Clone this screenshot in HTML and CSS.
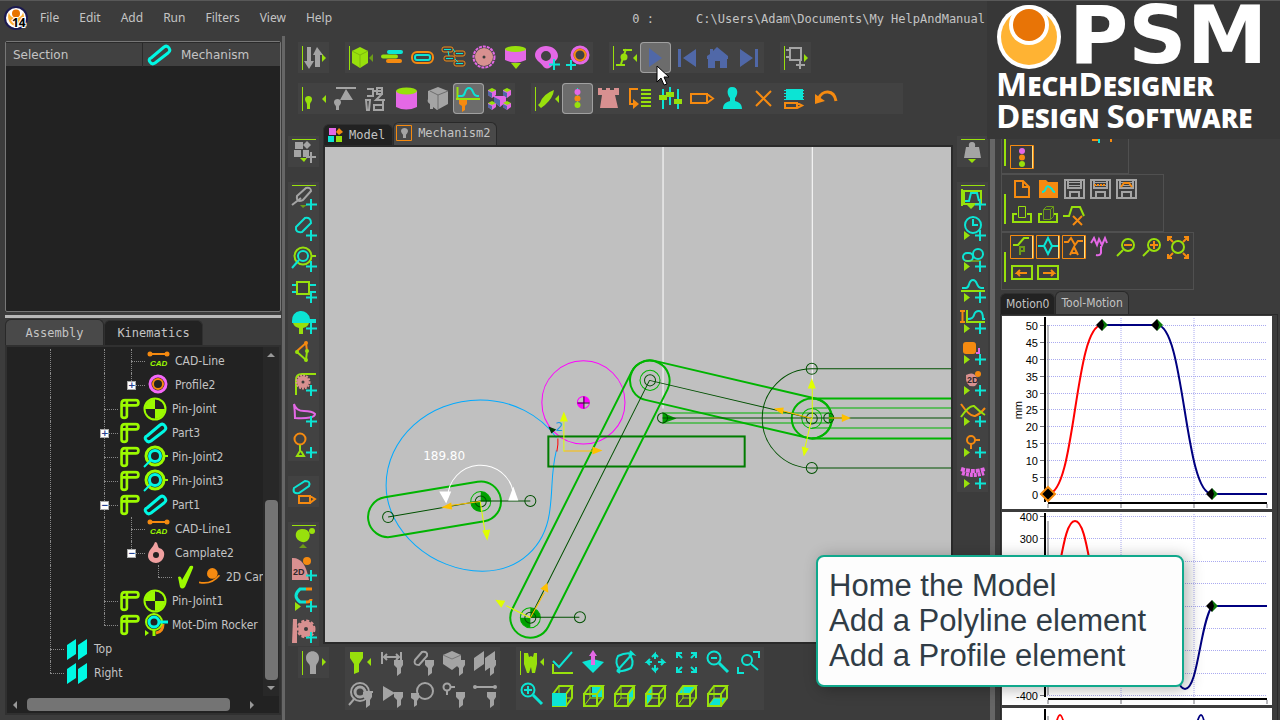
FILE: index.html
```html
<!DOCTYPE html>
<html lang="en">
<head>
<meta charset="utf-8">
<title>MechDesigner</title>
<link rel="stylesheet" href="styles.css">
</head>
<body>
<svg class="defs" aria-hidden="true">
  <symbol id="plus" viewBox="0 0 31 31"><path class="sc w2" d="M23 17v11M18 22.500h11"/></symbol>
  <symbol id="barl" viewBox="0 0 31 31"><path class="sg w1" d="M4.500 4v24"/></symbol>
  <symbol id="bart" viewBox="0 0 31 31"><path class="sg w1" d="M4 3.500h24"/></symbol>
  <symbol id="run" viewBox="0 0 31 31"><path class="fg" d="M7 18l6 4.500-6 4.500z"/></symbol>
  <symbol id="funnel" viewBox="0 0 31 31"><path class="fk" d="M18 13h9v5l-2 3v5l-4 3v-8l-3-3z"/></symbol>
  <symbol id="wire" viewBox="0 0 31 31"><path class="sg" d="M6 15h13v12H6zM6 15l6-8h13l-6 8M25 7v12l-6 8"/><path class="sg w1" d="M12 7v12h13M12 19l-6 8"/></symbol>
  <symbol id="floppy" viewBox="0 0 26 26"><path class="sk" d="M4 4h19v18H4zM7 4v8h13V4M9 22v-6h9v6"/><path class="sk w1" d="M8 6.500h11M8 9.500h11"/></symbol>
  <symbol id="lever" viewBox="0 0 27 24"><path class="st w3" d="M4 20V6q0-4 4-4h12q3 0 3 3t-3 3H4M10 3v17q0 2-3 2t-3-2"/></symbol>
  <symbol id="link" viewBox="0 0 27 24"><path class="stc w3" d="M5 15L18 4q3-2 5 1t-1 5L9 20q-3 2-5-1t1-4z"/></symbol>
  <symbol id="pin" viewBox="0 0 27 24"><circle class="st" cx="13" cy="12" r="10.500"/><path class="ft" d="M13 12V2a10 10 0 0 0-10 10zM13 12v10a10 10 0 0 0 10-10z"/></symbol>
  <symbol id="pinlink" viewBox="0 0 27 24"><circle class="st w3" cx="13" cy="11" r="9"/><circle class="stc w3" cx="13" cy="11" r="5.500"/><path class="stc" d="M9 15l-7 7"/><path class="st" d="M22 11h4"/></symbol>
  <symbol id="cadline" viewBox="0 0 27 24"><path class="so" d="M4 5h19"/><circle class="fo" cx="5" cy="5" r="2.500"/><circle class="fo" cx="22" cy="5" r="2.500"/><text class="cad" x="5" y="17">CAD</text></symbol>
  <symbol id="planes" viewBox="0 0 27 24"><path class="ftc" d="M3 8l9-6v15l-9 6zM14 8l9-6v15l-9 6z"/></symbol>
  <symbol id="node" viewBox="0 0 14 14"><path fill="#0a7a0a" d="M7 1l6 6-6 6z"/><path d="M7 1L1 7l6 6 2-6z"/></symbol>
</svg>

<div class="app">
  <header class="menubar">
    <svg class="appicon" viewBox="0 0 24 24"><circle cx="12" cy="12" r="11" fill="#fff" stroke="#1c1a50" stroke-width="2"/><path fill="#ffb030" d="M5 6c-3 8 2 14 7 14s10-6 7-14c-1 8-13 8-14 0z"/><circle cx="12" cy="7.500" r="4" fill="#e87400"/><text x="8" y="21">14</text></svg>
    <nav><button>File</button><button>Edit</button><button>Add</button><button>Run</button><button>Filters</button><button>View</button><button>Help</button></nav>
    <div class="status"><span>0 :</span><span>C:\Users\Adam\Documents\My HelpAndManual</span></div>
  </header>

  <main>
    <aside class="left">
      <section class="selection">
        <div class="head"><span>Selection</span><span><svg viewBox="0 0 27 24"><use href="#link"/></svg>Mechanism</span></div>
      </section>
      <div class="splitter"></div>
      <div class="tabs mono wide"><button class="tab on">Assembly</button><button class="tab">Kinematics</button></div>
      <section class="treebox">
        <ul class="tree">
          <li><i class="v"></i><i></i><i class="v"></i><i class="t"></i><svg class="n27" viewBox="0 0 27 24"><use href="#cadline"/></svg><span>CAD-Line</span></li>
          <li><i class="v"></i><i></i><i class="v"></i><i class="l"><button class="exp">+</button></i><svg class="n27" viewBox="0 0 27 24"><circle cx="13" cy="11" r="8" class="stp w3"/><circle cx="13" cy="11" r="5" class="so"/></svg><span>Profile2</span></li>
          <li><i class="v"></i><i></i><i class="t"></i><svg class="n24" viewBox="0 0 27 24"><use href="#lever"/></svg><svg class="n27" viewBox="0 0 27 24"><use href="#pin"/></svg><span>Pin-Joint</span></li>
          <li><i class="v"></i><i></i><i class="t"><button class="exp">+</button></i><svg class="n24" viewBox="0 0 27 24"><use href="#lever"/></svg><svg class="n27" viewBox="0 0 27 24"><use href="#link"/></svg><span>Part3</span></li>
          <li><i class="v"></i><i></i><i class="t"></i><svg class="n24" viewBox="0 0 27 24"><use href="#lever"/></svg><svg class="n27" viewBox="0 0 27 24"><use href="#pinlink"/></svg><span>Pin-Joint2</span></li>
          <li><i class="v"></i><i></i><i class="t"></i><svg class="n24" viewBox="0 0 27 24"><use href="#lever"/></svg><svg class="n27" viewBox="0 0 27 24"><use href="#pinlink"/></svg><span>Pin-Joint3</span></li>
          <li><i class="v"></i><i></i><i class="t"><button class="exp">−</button></i><svg class="n24" viewBox="0 0 27 24"><use href="#lever"/></svg><svg class="n27" viewBox="0 0 27 24"><use href="#link"/></svg><span>Part1</span></li>
          <li><i class="v"></i><i></i><i class="v"></i><i class="t"></i><svg class="n27" viewBox="0 0 27 24"><use href="#cadline"/></svg><span>CAD-Line1</span></li>
          <li><i class="v"></i><i></i><i class="v"></i><i class="l"><button class="exp">−</button></i><svg class="n27" viewBox="0 0 27 24"><path class="cam" fill-rule="evenodd" d="M10 1c3 0 2 3 4 6 4 1 6 4 5 8s-4 7-8 7-8-3-8-7c0-6 5-8 7-14zM11 11a3 3 0 1 0 0 6 3 3 0 0 0 0-6z"/></svg><span>Camplate2</span></li>
          <li><i class="v"></i><i></i><i class="v"></i><i></i><i class="l"></i><svg class="n27" viewBox="0 0 27 24"><path class="ft" d="M6 12q3-2 4 3L18 1q4-1 3 2L13 22q-3 3-5 0z"/></svg><svg class="n24" viewBox="0 0 27 24"><circle class="fo" cx="15" cy="8" r="6"/><path class="so" d="M0 18q14 3 23-8"/></svg><span>2D Cam</span></li>
          <li><i class="v"></i><i></i><i class="t"></i><svg class="n24" viewBox="0 0 27 24"><use href="#lever"/></svg><svg class="n27" viewBox="0 0 27 24"><use href="#pin"/></svg><span>Pin-Joint1</span></li>
          <li><i class="v"></i><i></i><i class="l"></i><svg class="n24" viewBox="0 0 27 24"><use href="#lever"/></svg><svg class="n27" viewBox="0 0 27 24"><path class="so w3" d="M21 11q0 8-7 9"/><circle class="st" cx="12" cy="9" r="8"/><circle class="stc w3" cx="12" cy="9" r="5"/><path class="stc w3" d="M17 9h9"/><path class="st w3" d="M12 17v6"/><path class="ft" d="M3 17l4 3-4 3z"/></svg><span>Mot-Dim Rocker</span></li>
          <li><i class="t"></i><svg class="n27" viewBox="0 0 27 24"><use href="#planes"/></svg><span>Top</span></li>
          <li><i class="l"></i><svg class="n27" viewBox="0 0 27 24"><use href="#planes"/></svg><span>Right</span></li>
        </ul>
        <div class="vbar"><b class="up"></b><div class="thumb"></div><b class="down"></b></div>
        <div class="hbar"><b class="prev"></b><div class="thumb"></div><b class="next"></b></div>
      </section>
    </aside>

    <div class="center">
      <div class="tools">
        <div class="group">
          <button class="tool"><svg viewBox="0 0 31 31"><use href="#barl"/><path class="fk" d="M9 5h4v14h3l-5 8-5-8h3zM17 25V13h-2l4-8 6 8h-3v12z"/><path class="fg" d="M24 12l4 4-4 4z"/></svg></button>
        </div>
        <div class="group">
          <button class="tool"><svg viewBox="0 0 31 31"><use href="#barl"/><path class="fg" d="M15 5l8 4v12l-8 5-8-5V9z"/><path stroke="#7cb80c" d="M7 9l8 4 8-4M15 13v13"/><path fill="#6c9c18" d="M28 12v8l-4-4z"/></svg></button>
          <button class="tool"><svg viewBox="0 0 31 31"><g stroke-linecap="round"><path class="sc w4" d="M13 10h12"/><path class="sg w4" d="M7 14.500h13"/><path class="so w4" d="M12 19h12"/></g></svg></button>
          <button class="tool"><svg viewBox="0 0 31 31"><rect class="so" x="5" y="10" width="21" height="11" rx="5"/><rect class="sc" x="8" y="13" width="15" height="5" rx="2"/></svg></button>
          <button class="tool"><svg viewBox="0 0 31 31"><g class="so w1"><rect x="4" y="5" width="11" height="5" rx="2"/><rect x="16" y="9" width="11" height="5" rx="2"/><rect x="6" y="14" width="11" height="5" rx="2"/><rect x="16" y="19" width="11" height="5" rx="2"/></g><path class="sc w1" d="M6 7.500h7M18 11.500h7M8 16.500h7M18 21.500h7M15 7l2 3M10 9l1 5M17 17l3 3"/></svg></button>
          <button class="tool"><svg viewBox="0 0 31 31"><circle cx="15" cy="15" r="10.500" class="sp" stroke-dasharray="3 1"/><circle class="fr" cx="15" cy="15" r="9"/><circle cx="15" cy="15" r="1.500" fill="#3c3c3c"/></svg></button>
          <button class="tool"><svg viewBox="0 0 31 31"><path class="fp" d="M5 7v11q10 5 21 0V7z"/><ellipse class="fg" cx="15.500" cy="7" rx="10.500" ry="3"/><path class="fg" d="M11 21h10l-5 6z"/></svg></button>
          <button class="tool"><svg viewBox="0 0 31 31"><path class="fp" fill-rule="evenodd" d="M15 4c6 0 12 4 12 10 0 4-4 5-5 8-2 5-8 6-10 2-3-4-8-6-8-11s5-9 11-9zM15 9a5 5 0 1 0 0 10 5 5 0 0 0 0-10z"/><use href="#plus"/></svg></button>
          <button class="tool"><svg viewBox="0 0 31 31"><circle cx="18" cy="13" r="8" class="sp w3"/><circle cx="18" cy="13" r="5.500" class="so"/><path class="sc" d="M9 18v10M4 23h10"/></svg></button>
        </div>
        <div class="group">
          <button class="tool"><svg viewBox="0 0 31 31"><use href="#barl"/><path class="sg" d="M7 23h9M12 22l5-15M14 8h9"/><circle class="fg" cx="15" cy="15" r="3.500"/><path class="fg" d="M28 12v8l-4-4z"/></svg></button>
          <button class="tool down"><svg viewBox="0 0 31 31"><path class="fb" d="M9 6l13 10L9 25z"/></svg></button>
          <button class="tool"><svg viewBox="0 0 31 31"><path class="fb" d="M7 7h3v18H7zM25 7v18L12 16z"/></svg></button>
          <button class="tool"><svg viewBox="0 0 31 31"><path class="fb" d="M15 5l11 9v3h-1v9h-7v-7h-5v7H6v-9H5v-3l3-2V7h3v2z"/></svg></button>
          <button class="tool"><svg viewBox="0 0 31 31"><path class="fb" d="M22 7h3v18h-3zM7 7v18l13-9z"/></svg></button>
        </div>
        <div class="group">
          <button class="tool"><svg viewBox="0 0 31 31"><use href="#barl"/><path class="sk" d="M10 6h11v12H10zM6 8h4M6 15h4M20 18v9M16 23h9"/><path class="fg" d="M24 12l4 4-4 4z"/></svg></button>
        </div>
      </div>
      <div class="tools">
        <div class="group">
          <button class="tool"><svg viewBox="0 0 31 31"><use href="#barl"/><path class="fg" d="M7 16c0-4 7-4 7 0 0 3-2 3-2 6v4H9v-4c0-3-2-3-2-6z"/><path class="fg" d="M28 12v8l-4-4z"/></svg></button>
          <button class="tool"><svg viewBox="0 0 31 31"><path class="sk" d="M7 5h20"/><path class="fk" d="M17 6l7 11H11zM5 19c0-4 7-4 7 0 0 3-2 3-2 5v3H7v-3c0-2-2-2-2-5z"/></svg></button>
          <button class="tool"><svg viewBox="0 0 31 31"><path class="sk" d="M7 6h6v7H7M13 8h9M17 5h5v6h-5zM22 11l-6 6h9M14 22h9v5h-9zM6 17h4l-1 10H7zM23 18v9"/></svg></button>
          <button class="tool"><svg viewBox="0 0 31 31"><path class="fp" d="M5 8v16q10 5 21 0V8z"/><ellipse class="fg" cx="15.500" cy="8" rx="10.500" ry="3.500"/></svg></button>
          <button class="tool"><svg viewBox="0 0 31 31"><path class="fk" d="M16 4l10 4v13l-11 6-4-3v2H8v-5c-2-1-3-3-2-5V8z"/><path stroke="#6e6e6e" d="M8 8l8 4 10-4M16 12v14"/></svg></button>
          <button class="tool down"><svg viewBox="0 0 31 31"><path class="sg" d="M4.500 4v12M3 16h24"/><path class="sc" d="M5 13h4c4 0 2-8 7-8s3 8 8 8h2"/><path class="fo" d="M6 17h8v4l-2 2v4l-3 2v-6l-3-2z"/></svg></button>
          <button class="tool"><svg viewBox="0 0 31 31"><path class="fp" d="M4 7h8v5l-4 3-4-3zM19 7h8v5l-4 3-4-3zM10 13h12v6l-6 5-6-5zM4 20h8v4l-4 3-4-3zM19 20h8v4l-4 3-4-3z"/><path class="fg" d="M4 7l4-2 4 2-4 2zM19 7l4-2 4 2-4 2zM4 20l4-2 4 2-4 2zM19 20l4-2 4 2-4 2z"/><path class="fb" d="M4 8l4 2v5l-4-3zM19 8l4 2v5l-4-3zM10 14l6 3v7l-6-5zM4 21l4 2v4l-4-3zM19 21l4 2v4l-4-3z"/></svg></button>
        </div>
        <div class="group pad">
          <button class="tool"><svg viewBox="0 0 31 31"><use href="#barl"/><path class="fg" d="M9 20Q12 11 23 7q-1 8-9 15l-4 3-3-3z"/><path class="fg" d="M28 12v8l-4-4z"/></svg></button>
          <button class="tool down"><svg viewBox="0 0 31 31"><path class="sc w1" d="M15.500 5v20"/><circle class="fp" cx="15.500" cy="9" r="3"/><circle class="fo" cx="15.500" cy="15.500" r="3"/><circle class="fg" cx="15.500" cy="22" r="3"/></svg></button>
          <button class="tool"><svg viewBox="0 0 31 31"><path class="fr" d="M5 5h4v2h4V5h4v2h4V5h5v7h-4l3 13H7l2-13H5z"/></svg></button>
          <button class="tool"><svg viewBox="0 0 31 31"><path class="so" d="M14 6H6v15h6"/><path class="fo" d="M9 16l6 5-6 5z"/><path class="sg" d="M17 7h10M17 11h10M17 15h10M17 19h10M17 23h10"/></svg></button>
          <button class="tool"><svg viewBox="0 0 31 31"><path class="sc" d="M8 6v20M15 4v18M23 6v20"/><path class="fg" d="M4 12h8v5H4zM11 9h8v5h-8zM19 16h8v5h-8z"/></svg></button>
          <button class="tool"><svg viewBox="0 0 31 31"><path class="so" d="M5 11h16v9H5zM21 11l6 4.500-6 4.500"/></svg></button>
          <button class="tool"><svg viewBox="0 0 31 31"><path class="fc" d="M15 4c7 0 6 8 3 11v3c4 1 7 3 7 8H6c0-5 3-7 7-8v-3c-3-3-4-11 2-11z"/></svg></button>
          <button class="tool"><svg viewBox="0 0 31 31"><path class="so" d="M8 8l15 15M23 8L8 23"/></svg></button>
          <button class="tool"><svg viewBox="0 0 31 31"><path class="fc" d="M7 6h17v11H7z"/><path class="sc w1" d="M5 7.500h20M5 10.500h20M5 13.500h20M5 16.500h20"/><path class="so" d="M6 20h12v5H6zM18 20l5 2.500-5 2.500"/></svg></button>
          <button class="tool"><svg viewBox="0 0 31 31"><path class="so w3" d="M9 15c3-8 15-9 17 3"/><path class="fo" d="M5 11v10l10-3z"/></svg></button>
        </div>
      </div>

      <div class="work">
        <div class="vtools">
          <div class="group"><button class="tool"><svg viewBox="0 0 31 31"><use href="#bart"/><path class="fk" d="M7 6h8v7H7zM19 5l4 4-4 4-4-4zM6 14h7v7H6zM15 14h6v7h-6z"/><path class="sk" d="M23 16v11M18 21h10"/><path class="fg" d="M12 22h7l-3 4z"/></svg></button></div>
          <div class="group">
            <button class="tool"><svg viewBox="0 0 31 31"><use href="#bart"/><path class="sk" d="M9 14l9-8q5-1 5 3l-8 9q-7 3-6-4zM4 23l9-7"/><path fill="#6c9c18" d="M12 23h7l-4 3z"/><use href="#plus"/></svg></button>
            <button class="tool"><svg viewBox="0 0 31 31"><path class="sc" d="M8 14l9-9q6-1 6 5l-9 9q-7 1-6-5z"/><use href="#plus"/></svg></button>
            <button class="tool"><svg viewBox="0 0 31 31"><circle class="sg" cx="15" cy="12" r="8.500"/><circle class="sc" cx="15" cy="12" r="5"/><path class="sc" d="M11 16l-7 8"/><path class="sg" d="M23 12h5"/><use href="#plus"/></svg></button>
            <button class="tool"><svg viewBox="0 0 31 31"><path class="sc" d="M4 10h24M4 17h24"/><rect class="sg" x="9" y="7" width="12" height="12" style="fill:#3c3c3c"/><use href="#plus"/></svg></button>
            <button class="tool"><svg viewBox="0 0 31 31"><path class="fc" d="M4 15a9 9 0 0 1 18-2h6v4H4z"/><path class="fg" d="M5 17h16q-1 4-6 5v6h-4v-6q-5-1-6-5z"/><use href="#plus"/></svg></button>
            <button class="tool"><svg viewBox="0 0 31 31"><path class="sg" d="M9 15l9 8 1-9"/><path class="so" d="M9 14l9-8 1 8"/><circle class="fg" cx="9" cy="15" r="2"/><circle class="fg" cx="18" cy="23" r="2"/><circle class="fg" cx="19" cy="14" r="2"/><circle class="fo" cx="18" cy="6" r="2"/></svg></button>
            <button class="tool"><svg viewBox="0 0 31 31"><path class="sg" d="M8 27V12q0-6 6-6h14"/><circle cx="15" cy="14" r="6" class="fr"/><circle cx="15" cy="14" r="6.500" stroke="#dc9090" stroke-width="2" stroke-dasharray="2 1"/><circle cx="15" cy="14" r="1.500" fill="#3c3c3c"/><use href="#plus"/></svg></button>
            <button class="tool"><svg viewBox="0 0 31 31"><path class="sp" d="M6 5q2 7 10 7t11 3q0 5-20 4 0-7-1-14z"/><use href="#plus"/></svg></button>
            <button class="tool"><svg viewBox="0 0 31 31"><circle class="so" cx="12" cy="9" r="5.500"/><path class="sg" d="M12 15v6l-3 5h7l-3-5"/><use href="#plus"/></svg></button>
          </div>
          <div class="group"><button class="tool"><svg viewBox="0 0 31 31"><path class="sc" d="M6 12l11-7q6 0 4 5L11 17q-7 1-5-5z"/><path class="so" d="M11 20h11v7H11zM22 20l5 3-5 4"/></svg></button></div>
          <div class="group">
            <button class="tool"><svg viewBox="0 0 31 31"><use href="#bart"/><path class="fg" d="M14 7c9 0 9 8 6 11-3 4-10 2-12-3-1-4 1-8 6-8z"/><circle class="fg" cx="24" cy="9" r="3"/><path fill="#6c9c18" d="M15 22l4 4h-8z"/></svg></button>
            <button class="tool"><svg viewBox="0 0 31 31"><path class="fr" d="M4 5q13-1 17 22H4z"/><circle class="fo" cx="19" cy="8" r="4"/><text class="two" x="5" y="22">2D</text><use href="#plus"/></svg></button>
            <button class="tool"><svg viewBox="0 0 31 31"><path class="sc w3" d="M18 5h-6q-8 7 0 13h6"/><path class="so w3" d="M18 5h6M18 18q5 0 5-3"/><use href="#run"/><use href="#plus"/></svg></button>
            <button class="tool"><svg viewBox="0 0 31 31"><path class="fr" d="M5 4h4v24H4z"/><circle class="fr" cx="18" cy="14" r="8"/><circle cx="18" cy="14" r="8.500" stroke="#dc9090" stroke-width="2" stroke-dasharray="3 2"/><circle cx="18" cy="14" r="2" fill="#3c3c3c"/><use href="#plus"/></svg></button>
          </div>
        </div>

        <div class="stage">
          <div class="tabs mono">
            <button class="tab"><svg viewBox="0 0 16 16"><path class="fp" d="M2 1h7v7H2z"/><path class="fo" d="M12 1l4 4-4 3-3-3z"/><path class="fc" d="M1 9h6v6H1z"/><path class="fg" d="M9 9h6v6H9z"/></svg>Model</button>
            <button class="tab on"><svg viewBox="0 0 16 16"><path class="so w1" d="M.5.5h15v15H.5z"/><path class="fk" d="M5 6c0-4 7-4 7 0 0 2-2 3-2 4v3H7v-3c0-1-2-2-2-4z"/></svg>Mechanism2</button>
          </div>
          <div class="frame">
            <svg class="model" viewBox="325 147 625 497" preserveAspectRatio="xMinYMin slice">
              <path stroke="#fff" d="M662.500 147v261M811.500 147v238"/>
              <path stroke="#00aaff" d="M556 437C540 415 512 399.500 480 399.500C428 399.500 386 438 386 485C386 530 432 570.500 482 570.500C520 570.500 544 545 549 513C553 487 550 475 556 450"/>
              <path stroke="#f00" d="M557.500 438v6l-1 7"/>
              <circle cx="583" cy="402" r="41.500" stroke="#ff00ff"/>
              <circle cx="583" cy="402" r="6" stroke="#ff00ff"/><path fill="#ff00ff" d="M583 402v-6a6 6 0 0 1 6 6zM583 402v6a6 6 0 0 1-6-6z"/><path stroke="#300030" d="M577 402.500h12M583.500 396v12"/>
              <rect class="w2" x="548" y="436" width="196" height="30" stroke="#007c00"/>
              <g stroke="#00b400" class="w2">
                <rect x="-20" y="-20" width="134" height="40" rx="20" transform="translate(388 516.500) rotate(-9.500)"/>
                <rect x="-20" y="-20" width="305" height="40" rx="20" transform="translate(530 617) rotate(-63.300)"/>
                <rect x="-20" y="-20" width="206" height="40" rx="20" transform="translate(649.500 380) rotate(13.200)"/>
                <circle cx="811" cy="418" r="20"/><path d="M811 398h139M811 438h139"/>
              </g>
              <g stroke="#00b400"><path d="M811 407.500h139M811 427.500h139M662 412.500h166M662 422.500h166"/><circle cx="811" cy="418" r="10"/><circle cx="649.500" cy="380" r="10"/><circle cx="530" cy="617" r="10"/><circle cx="480.500" cy="501" r="10"/></g>
              <path fill="#00a000" d="M480.500 501v-10a10 10 0 0 1 10 10zM480.500 501v10a10 10 0 0 1-10-10zM530 617v-10a10 10 0 0 1 10 10zM530 617v10a10 10 0 0 1-10-10zM662 412l14 6-14 5zM828 412l4 5-4 6z"/>
              <g stroke="#005000">
                <path d="M811 368.500h139M811 467.500h139M811 368.500a49 49 0 0 0 0 99M662 417.500h288M388 516.500l92-16h50M649 380l-119 236.500h49M649 380l162 38"/>
                <circle cx="811" cy="368.500" r="5.500"/><circle cx="811" cy="467.500" r="5.500"/><circle cx="811" cy="418" r="5.500"/><circle cx="828" cy="417.500" r="5"/><circle cx="662" cy="417.500" r="5"/><circle cx="388" cy="516.500" r="5.500"/><circle cx="480.500" cy="501" r="5.500"/><circle cx="530" cy="500.500" r="5.500"/><circle cx="649.500" cy="380" r="5.500"/><circle cx="530" cy="617" r="5.500"/><circle cx="579.500" cy="616.500" r="5.500"/>
              </g>
              <path fill="#003c00" d="M548 426l8 3-5 4z"/>
              <path stroke="#ffc000" d="M480 501l-30 4M530 617l14-25M563.500 450.500h30M811 418l-34-9M828 417.500h14"/>
              <path fill="#ffc000" d="M441 507l10-5 1 7zM547 582l1 10-8-4zM602 450l-10-4v8zM773 408l10-1-1 7zM850 417.500l-9-4v8z"/>
              <path stroke="#e0ff00" d="M480 501l5 32M530 617l-24-12M563.500 451v-30M811.500 418v-32M811 418l-7 30"/>
              <path fill="#e0ff00" d="M487 540l-5-10 8-1zM495 599l10 1-4 7zM563.500 411l-4 10h8zM811 378l-4 10h8zM803 456l-2-10 7 2z"/>
              <path stroke="#fff" d="M447.500 497A33 33 0 0 1 513 492"/><path fill="#fff" d="M439 491h12l-5 12zM513 486l5 14h-10z"/>
              <text x="423" y="460" fill="#fff" class="dim">189.80</text><text x="555" y="431" fill="#1a9ae0" class="dim">2</text>
            </svg>
          </div>
        </div>

        <div class="vtools">
          <div class="group"><button class="tool"><svg viewBox="0 0 31 31"><use href="#bart"/><path class="fk" d="M12 11q-1-5 3-5t3 5h4l2 11H7l2-11z"/><path class="fg" d="M11 23h8l-4 4z"/></svg></button></div>
          <div class="group">
            <button class="tool"><svg viewBox="0 0 31 31"><use href="#bart"/><path class="sg" d="M7 9h17v13H7zM5 7v17"/><path class="sc" d="M8 19h4l2-8h6l2 8"/><path class="fg" d="M10 23h8l-4 4z"/><use href="#plus"/></svg></button>
            <button class="tool"><svg viewBox="0 0 31 31"><circle class="sc" cx="16" cy="12" r="8"/><path class="sc" d="M16 6v6h5"/><use href="#run"/><use href="#plus"/></svg></button>
            <button class="tool"><svg viewBox="0 0 31 31"><rect class="sc" x="6" y="9" width="10" height="8" rx="4"/><circle class="sc" cx="21" cy="10" r="5"/><path class="sg w1" d="M8 17h16"/><use href="#run"/><use href="#plus"/></svg></button>
            <button class="tool"><svg viewBox="0 0 31 31"><path class="sc" d="M5 13h4c4 0 2-8 7-8s3 8 8 8h3"/><path class="sg" d="M4 16h24"/><use href="#run"/><use href="#plus"/></svg></button>
            <button class="tool"><svg viewBox="0 0 31 31"><path class="so" d="M3 5h5M3 16h5M5.500 5v11"/><path class="sg" d="M10 4v12h18"/><path class="sc" d="M11 13q5 0 6-4t5-4 4 8h2"/><use href="#run"/><use href="#plus"/></svg></button>
            <button class="tool"><svg viewBox="0 0 31 31"><rect class="fo" x="6" y="5" width="13" height="12" rx="3"/><path class="sp" d="M22 11v5h-3"/><use href="#run"/><use href="#plus"/></svg></button>
            <button class="tool"><svg viewBox="0 0 31 31"><path class="fr" d="M9 7q7-4 11 2 3 4-2 9-10 2-9-11z"/><circle class="fo" cx="21" cy="6" r="3"/><text class="two" x="10" y="15">2D</text><use href="#run"/><use href="#plus"/></svg></button>
            <button class="tool"><svg viewBox="0 0 31 31"><path class="so" d="M4 5q9 13 14 12 5-2 10-8"/><path class="sg" d="M4 18q8-12 13-11 6 6 11 9"/><use href="#run"/><use href="#plus"/></svg></button>
            <button class="tool"><svg viewBox="0 0 31 31"><circle class="so" cx="14" cy="10" r="4"/><path class="so" d="M18 10h5M14 14v5"/><use href="#run"/><use href="#plus"/></svg></button>
            <button class="tool"><svg viewBox="0 0 31 31"><path class="sp w4" stroke-dasharray="4 1" d="M4 8q12 4 24 0"/><path class="sp w4" stroke-dasharray="3 1" d="M5 12q11 4 22 0"/><use href="#run"/><use href="#plus"/></svg></button>
          </div>
        </div>
      </div>

      <div class="tools bottom">
        <div class="group"><button class="tool"><svg viewBox="0 0 31 31"><use href="#barl"/><path class="fk" d="M8 11c0-9 13-9 13 0 0 5-3 5-3 9v7h-6v-7c0-4-4-4-4-9z"/><path class="fg" d="M24 11l4 4-4 4z"/></svg></button></div>
        <div class="group c5">
          <button class="tool"><svg viewBox="0 0 31 31"><path class="fg" d="M5 5h13v6l-4 6v8l-5 2V17l-4-6z"/><path class="fg" d="M26 11v8l-4-4z"/></svg></button>
          <button class="tool"><svg viewBox="0 0 31 31"><path class="sk" d="M6 5v12M25 5v12M8 10h15M11 7l-3 3 3 3M20 7l3 3-3 3"/><use href="#funnel"/></svg></button>
          <button class="tool"><svg viewBox="0 0 31 31"><path class="sk" d="M8 13l7-8q6-1 5 4l-8 9q-6 0-4-5z"/><use href="#funnel"/></svg></button>
          <button class="tool"><svg viewBox="0 0 31 31"><path class="fk" d="M14 4l9 4v8l-9 7-9-6V8z"/><path stroke="#777" d="M5 8l9 4 9-4"/><use href="#funnel"/></svg></button>
          <button class="tool"><svg viewBox="0 0 31 31"><path class="fk" d="M5 11l10-7v13L5 24zM16 11l10-7v13l-10 7z"/><use href="#funnel"/></svg></button>
          <button class="tool"><svg viewBox="0 0 31 31"><circle class="sk" cx="15" cy="13" r="9"/><circle class="sk w3" cx="15" cy="13" r="5"/><path class="sk" d="M10 19l-6 7M20 13h8"/><use href="#funnel"/></svg></button>
          <button class="tool"><svg viewBox="0 0 31 31"><path class="fk" d="M7 7l12 7-12 8z"/><use href="#funnel"/></svg></button>
          <button class="tool"><svg viewBox="0 0 31 31"><circle class="sk" cx="18" cy="12" r="8"/><path class="fk" d="M4 14h8v5l-2 3v4l-3 2v-7l-3-2z"/></svg></button>
          <button class="tool"><svg viewBox="0 0 31 31"><circle class="sk" cx="9" cy="8" r="3.500"/><path class="sk" d="M13 8h4M9 12v4"/><use href="#funnel"/></svg></button>
          <button class="tool"><svg viewBox="0 0 31 31"><path class="sk" d="M5 8h21"/><circle class="fk" cx="6" cy="8" r="2"/><circle class="fk" cx="26" cy="8" r="2"/><use href="#funnel"/></svg></button>
        </div>
        <div class="group c8">
          <button class="tool"><svg viewBox="0 0 31 31"><use href="#barl"/><path class="fg" d="M8 6h4l1 4 2-1 2 1 1-4h3v11l-2 9h-3l-1-6-2 6h-2L8 17z"/><path class="fg" d="M28 11v8l-4-4z"/></svg></button>
          <button class="tool"><svg viewBox="0 0 31 31"><path class="sc" d="M6 14l6 6L25 5"/><path class="sg" d="M6 17v9h20"/></svg></button>
          <button class="tool"><svg viewBox="0 0 31 31"><path class="fc" d="M15 12l11 3-11 11-11-11z"/><path class="fp" d="M13 18V9h-2l4-6 4 6h-2v9z"/></svg></button>
          <button class="tool"><svg viewBox="0 0 31 31"><path class="sc" d="M11 23q-6-7-2-14 8-4 15-2l-3-3M20 7q6 7 2 14-8 4-14 3l3 2M8 24L24 6"/></svg></button>
          <button class="tool"><svg viewBox="0 0 31 31"><path class="sc" d="M15 12V7l-3 3M15 7l3 3M15 18v6l-3-3M15 24l3-3M12 15H7l3-3M7 15l3 3M18 15h6l-3-3M24 15l-3 3"/></svg></button>
          <button class="tool"><svg viewBox="0 0 31 31"><path class="sc" d="M6 11V6h5M6 6l5 5M25 11V6h-5M25 6l-5 5M6 20v5h5M6 25l5-5M25 20v5h-5M25 25l-5-5"/></svg></button>
          <button class="tool"><svg viewBox="0 0 31 31"><circle class="sc" cx="12" cy="11" r="6.500"/><path class="sc" d="M9 11h6"/><path class="sc w3" d="M17 16l9 9"/></svg></button>
          <button class="tool"><svg viewBox="0 0 31 31"><circle class="sc" cx="14" cy="13" r="5"/><path class="sc" d="M18 17l7 6M20 5h6v6M5 20v6h6"/></svg></button>
          <button class="tool"><svg viewBox="0 0 31 31"><circle class="sc" cx="12" cy="11" r="6.500"/><path class="sc" d="M8 11h8M12 7v8"/><path class="sc w3" d="M17 16l9 9"/></svg></button>
          <button class="tool"><svg viewBox="0 0 31 31"><use href="#wire"/><path class="fc" d="M5 14h14v13H5z"/></svg></button>
          <button class="tool"><svg viewBox="0 0 31 31"><path class="fc" d="M14 8h11v10H14z"/><use href="#wire"/></svg></button>
          <button class="tool"><svg viewBox="0 0 31 31"><path class="fc" d="M19 15l6-8v12l-6 8z"/><use href="#wire"/></svg></button>
          <button class="tool"><svg viewBox="0 0 31 31"><path class="fc" d="M6 15l6-8v12l-6 8z"/><use href="#wire"/></svg></button>
          <button class="tool"><svg viewBox="0 0 31 31"><path class="fc" d="M6 15l6-8h13l-6 8z"/><use href="#wire"/></svg></button>
          <button class="tool"><svg viewBox="0 0 31 31"><path class="fc" d="M6 27l6-8h13l-6 8z"/><use href="#wire"/></svg></button>
        </div>
      </div>
    </div>

    <aside class="right">
      <div class="box b4">
        <button class="mini"></button><button class="mini"></button><button class="mini"></button><button class="mini"><svg viewBox="0 0 26 26"><path class="so" d="M5 22h7M24 20v4"/><path class="sc" d="M12 20v5"/></svg></button>
        <button class="mini"><svg viewBox="0 0 26 26"><path class="so w1" d="M1.500 1.500h23v23h-23z"/><path stroke="#ffe080" d="M23.500 2v22"/><circle class="fp" cx="13" cy="7" r="3"/><circle class="fo" cx="13" cy="13.500" r="3"/><circle class="fg" cx="13" cy="20" r="3"/></svg></button>
      </div>
      <div class="box b5">
        <button class="mini"><svg viewBox="0 0 26 26"><path class="so" d="M6 5h8l6 6v10H6zM14 5v6h6"/></svg></button>
        <button class="mini"><svg viewBox="0 0 26 26"><path class="fo" d="M4 4h7l2 2h10v16H4z"/><path class="sc" d="M7 16q3 0 4-4t6 1q1 3 3 3"/></svg></button>
        <button class="mini"><svg viewBox="0 0 26 26"><use href="#floppy"/></svg></button>
        <button class="mini"><svg viewBox="0 0 26 26"><use href="#floppy"/><path class="so" d="M7 9h12" stroke-dasharray="2 1"/></svg></button>
        <button class="mini"><svg viewBox="0 0 26 26"><use href="#floppy"/><path class="so" d="M8 11l3-4h5l3 4"/></svg></button>
        <button class="mini"><svg viewBox="0 0 26 26"><path class="sg" d="M8 12H4v8h18v-8h-4"/><path class="sg w1" d="M9.500 4.500h7v11h-7z"/></svg></button>
        <button class="mini"><svg viewBox="0 0 26 26"><path class="sg" d="M7 12H4v8h18v-8h-3"/><path stroke="#6c9c18" d="M8.500 7.500h7v10h-7zM8.500 7.500l3-3h7v10l-3 3M15.500 7.500l3-3"/></svg></button>
        <button class="mini"><svg viewBox="0 0 26 26"><path class="sg" d="M2 14h6l3-9h8l4 9"/><path class="so" d="M12 14l9 9M21 14l-9 9"/></svg></button>
      </div>
      <div class="box b7">
        <button class="mini"><svg viewBox="0 0 26 26"><path class="so w1" d="M1.500 1.500h23v23h-23z"/><path stroke="#ffe080" d="M23.500 2v22"/><path class="sg" d="M4 11h5l6-7h5"/><path stroke="#6c9c18" stroke-width="2" d="M11 21v-8h4v4h-4"/></svg></button>
        <button class="mini"><svg viewBox="0 0 26 26"><path class="so w1" d="M1.500 1.500h23v23h-23z"/><path stroke="#ffe080" d="M23.500 2v22"/><path class="sc" d="M3 12h6l4-8 4 8h6M9 12l4 8 4-8"/></svg></button>
        <button class="mini"><svg viewBox="0 0 26 26"><path class="so w1" d="M1.500 1.500h23v23h-23z"/><path stroke="#ffe080" d="M23.500 2v22"/><path class="so" d="M3 8h4l3-4 4 7 3-4h5M9 21l4-8 4 8M11 19h5"/></svg></button>
        <button class="mini"><svg viewBox="0 0 26 26"><path class="sp" d="M4 9l3-5 3 7 2-6 3 6 3-7 2 5M14 12v7q-1 3-5 2"/></svg></button>
        <button class="mini"><svg viewBox="0 0 26 26"><circle class="sg" cx="15" cy="11" r="6"/><path class="so" d="M11 11h8"/><path class="sg" d="M10 16l-6 6"/></svg></button>
        <button class="mini"><svg viewBox="0 0 26 26"><circle class="sg" cx="15" cy="11" r="6"/><path class="so" d="M11 11h8M15 7v8"/><path class="sg" d="M10 16l-6 6"/></svg></button>
        <button class="mini"><svg viewBox="0 0 26 26"><circle class="sg" cx="13" cy="13" r="6"/><path class="so" d="M3 7V3h4M3 3l5 5M23 7V3h-4M23 3l-5 5M3 20v4h4M3 24l5-5M23 20v4h-4M23 24l-5-5"/></svg></button>
        <button class="mini"><svg viewBox="0 0 26 26"><path class="sg" d="M3 6h20v13H3z"/><path class="so" d="M18 13H8l3-3M8 13l3 3"/></svg></button>
        <button class="mini"><svg viewBox="0 0 26 26"><path class="sg" d="M3 6h20v13H3z"/><path class="so" d="M8 13h11l-3-3M19 13l-3 3"/></svg></button>
      </div>
      <div class="tabs sans"><button class="tab">Motion0</button><button class="tab on">Tool-Motion</button></div>
      <div class="charts">
        <svg class="chart" viewBox="1002 318 270 193">
          <path class="grid" d="M1045 327.500h222M1045 344.500h222M1045 361.500h222M1045 378.500h222M1045 395.500h222M1045 411.500h222M1045 428.500h222M1045 445.500h222M1045 462.500h222M1045 479.500h222M1045 496.500h222M1121 320v184M1194 320v184"/>
          <path class="tick" d="M1040 327.500h5M1040 344.500h5M1040 361.500h5M1040 378.500h5M1040 395.500h5M1040 411.500h5M1040 428.500h5M1040 445.500h5M1040 462.500h5M1040 479.500h5M1040 496.500h5M1048 506v4M1121 506v4M1194 506v4M1267 506v4M1048 327v169"/>
          <path class="axis" d="M1045 319v185M1048 505h219"/>
          <g class="lab"><text x="1038" y="332">50</text><text x="1038" y="349">45</text><text x="1038" y="366">40</text><text x="1038" y="383">35</text><text x="1038" y="400">30</text><text x="1038" y="416">25</text><text x="1038" y="433">20</text><text x="1038" y="450">15</text><text x="1038" y="467">10</text><text x="1038" y="484">5</text><text x="1038" y="501">0</text><text transform="translate(1022 403) rotate(-90)">mm</text></g>
          <path class="red" d="M1048 496C1076 496 1074 327 1102 327"/><path class="navy" d="M1102 327h55C1185 327 1184 496 1212 496h55"/>
          <path d="M1048 489l7 7-7 7-7-7z" fill="#000" stroke="#f78a0a" stroke-width="2"/>
          <use href="#node" x="1095" y="320" width="14" height="14"/><use href="#node" x="1150" y="320" width="14" height="14"/><use href="#node" x="1205" y="489" width="14" height="14"/>
        </svg>
        <svg class="chart" viewBox="1002 514 270 193">
          <path class="grid" d="M1045 518.500h222M1045 540.500h222M1045 563.500h222M1045 585.500h222M1045 608.500h222M1045 630.500h222M1045 652.500h222M1045 675.500h222M1045 697.500h222M1121 516v184M1194 516v184"/>
          <path class="tick" d="M1040 518.500h5M1040 540.500h5M1040 697.500h5M1048 702v4M1121 702v4M1194 702v4M1267 702v4M1048 523v174"/>
          <path class="axis" d="M1045 515v184M1048 701h219"/>
          <g class="lab"><text x="1038" y="523">400</text><text x="1038" y="545">300</text><text x="1038" y="702">-400</text></g>
          <path class="red" d="M1048 608C1060 590 1062 523 1075 523S1090 590 1102 608"/><path class="navy" d="M1157 608C1170 626 1172 691 1185 691S1200 626 1212 608h55"/>
          <use href="#node" x="1205" y="601" width="14" height="14"/>
        </svg>
        <svg class="chart" viewBox="1002 710 270 193">
          <path class="axis" d="M1045 711v184"/><path class="tick" d="M1048 718v170"/><path class="red" d="M1048 800C1053 740 1056 717 1060 717S1067 740 1075 800"/><path class="navy" d="M1185 800C1193 740 1197 717 1201 717S1207 740 1212 800"/>
        </svg>
      </div>
    </aside>
  </main>

  <div class="brand">
    <div class="brandtop"><svg viewBox="0 0 66 66"><circle cx="33" cy="33" r="32" fill="#fff"/><circle cx="33" cy="33" r="28" fill="#ffb333"/><circle cx="33" cy="21" r="20" fill="#fff"/><circle cx="33" cy="21" r="16" fill="#e87406"/></svg><strong>PSM</strong></div>
    <p><b>M</b>ech<b>D</b>esigner</p><p><b>D</b>esign <b>S</b>oftware</p>
  </div>
  <div class="callout"><p>Home the Model</p><p>Add a Polyline element</p><p>Add a Profile element</p></div>
  <svg class="cursor" viewBox="0 0 14 22"><path fill="#fff" stroke="#000" d="M1 1v16l4-4 3 7 3-1-3-7h5z"/></svg>
</div>
</body>
</html>
```
FILE: styles.css
```css
* { box-sizing: border-box; }
body { margin: 0; background: #3c3c3c; color: #c4c4c4; font: 12px/16px "Noto Sans", "Open Sans", sans-serif; }
button { font: inherit; color: inherit; background: none; border: 0; padding: 0; }
p { margin: 0; }
svg { display: block; fill: none; }
.defs { position: absolute; width: 0; height: 0; }

.sg, .sc, .so, .sp, .sk, .st, .stc, .stp { stroke-width: 2; }
.sg { stroke: #98e00c; } .fg { fill: #98e00c; }
.sc { stroke: #0ce4d4; } .fc { fill: #0ce4d4; }
.so { stroke: #f58a10; } .fo { fill: #f58a10; }
.sp { stroke: #e468e6; } .fp { fill: #e468e6; }
.sk { stroke: #a4a4a4; } .fk { fill: #a4a4a4; }
.fb { fill: #5068a8; } .fr { fill: #d89090; }
.st { stroke: #9cfa00; } .ft { fill: #9cfa00; }
.stc { stroke: #00f8e4; } .ftc { fill: #00f8e4; }
.stp { stroke: #f468f8; } .cam { fill: #f0a0a0; }
.w1 { stroke-width: 1; } .w2 { stroke-width: 2; } .w3 { stroke-width: 3; } .w4 { stroke-width: 4; }
.cad { font: italic bold 8px "Liberation Sans", sans-serif; fill: #9cfa00; }
.two { font: bold 9px "Liberation Sans", sans-serif; fill: #30282c; }

.app { position: relative; display: flex; flex-direction: column; height: 100vh; min-height: 720px; overflow: hidden; border-top: 1px solid #585858; }
.menubar { display: flex; align-items: center; flex: none; height: 35px; padding-bottom: 2px; padding-left: 4px; padding-right: 295px; }
.appicon { width: 24px; height: 24px; overflow: visible; }
.appicon text { font: bold 12px "Noto Sans", sans-serif; fill: #000; stroke: #fff; stroke-width: 2; paint-order: stroke; }
.menubar nav { display: flex; gap: 20px; margin-left: 12px; }
.status { display: flex; gap: 42px; margin-left: auto; font: 12px/16px "DejaVu Sans Mono", monospace; white-space: nowrap; padding-top: 3px; }

main { display: flex; flex: 1; min-height: 0; }
.left { display: flex; flex-direction: column; flex: none; width: 285px; padding: 5px 1px 5px 5px; border-right: 3px solid #666; }
.selection { flex: none; height: 271px; border: 1px solid #777; border-radius: 2px; background: #222; }
.head { display: grid; grid-template-columns: 137px 1fr; height: 24px; border-top: 1px solid #2a2a2a; font: 12px/24px "DejaVu Sans", sans-serif; background: #414141; }
.head span { display: flex; align-items: center; gap: 8px; padding-left: 7px; border-right: 1px solid #2a2a2a; }
.head span + span { padding-left: 3px; border: 0; }
.head svg { width: 27px; height: 24px; }
.splitter { flex: none; height: 3px; margin: 3px 0 1px; background: #b8b8b8; }

.tabs { display: flex; align-items: flex-end; flex: none; }
.mono { font: 12px/16px "DejaVu Sans Mono", monospace; }
.tab { display: flex; align-items: center; gap: 6px; height: 21px; padding: 0 7px 0 3px; background: #222; border: 1px solid #303030; border-bottom: 0; border-radius: 6px 6px 0 0; }
.tab svg { width: 16px; height: 16px; }
.tab.on { height: 23px; background: #494949; border-color: #292929; padding: 0 6px 2px 2px; }
.wide .tab { width: 99px; height: 25px; justify-content: center; padding: 0; }
.wide .tab.on { height: 26px; }
.treebox { display: grid; grid-template: 1fr 17px / 1fr 16px; flex: 1; min-height: 0; border: 2px solid #303030; background: #222; }
.tree { list-style: none; margin: 0; padding: 2px 0 0 30px; overflow: hidden; font-family: "DejaVu Sans Condensed", Roboto, sans-serif; }
.tree li { display: flex; align-items: center; height: 24px; white-space: nowrap; }
.tree i { position: relative; flex: none; width: 27px; height: 24px; }
.tree i::before, .tree i::after { content: ""; position: absolute; left: 13px; }
.tree .v::before, .tree .t::before { top: 0; bottom: 0; border-left: 1px dotted #888; }
.tree .l::before { top: 0; height: 12px; border-left: 1px dotted #888; }
.tree .t::after, .tree .l::after { top: 12px; right: 0; border-top: 1px dotted #888; }
.exp { position: absolute; z-index: 1; left: 9px; top: 8px; width: 9px; height: 9px; background: #fff; border: 1px solid #aaa; color: #234090; font: bold 9px/7px "DejaVu Sans", sans-serif; }
.tree svg { flex: none; height: 24px; }
.n27 { width: 27px; } .n24 { width: 24px; }
.tree span { padding-left: 3px; }
.vbar { display: flex; flex-direction: column; align-items: center; background: #282828; }
.vbar .thumb { flex: 0 1 180px; width: 13px; margin-top: auto; }
.thumb { background: #747474; border-radius: 4px; }
.vbar .up { margin-top: 6px; border: 4px solid transparent; border-top: 0; border-bottom-color: #999; }
.vbar .down { margin: 6px 0; border: 4px solid transparent; border-bottom: 0; border-top-color: #999; }
.hbar { display: flex; align-items: center; gap: 10px; padding-left: 6px; }
.hbar .thumb { flex: 0 1 203px; height: 13px; }
.hbar .prev { border: 4px solid transparent; border-left: 0; border-right-color: #999; }
.hbar .next { margin-left: 10px; border: 4px solid transparent; border-right: 0; border-left-color: #999; }

.center { display: flex; flex-direction: column; flex: 1; min-width: 0; padding-top: 6px; }
.tools { display: flex; flex: none; gap: 16px; padding-left: 13px; margin-bottom: 10px; }
.tools + .tools { margin-bottom: 8px; }
.group { display: flex; background: #424242; }
.pad { padding-right: 62px; }
.tool { flex: none; width: 31px; height: 31px; }
.tool svg { width: 100%; height: 100%; }
.tool.down { background: #6c6c6c; border-radius: 4px; box-shadow: inset 0 0 0 1px #a0a0a0; }
.work { display: flex; flex: 1; min-height: 0; padding: 0 2px 0 3px; gap: 4px; }
.vtools { display: flex; flex-direction: column; flex: none; gap: 15px; padding-top: 14px; width: 31px; }
.vtools .group { flex-direction: column; }
.stage { display: flex; flex-direction: column; flex: 1; min-width: 0; }
.frame { flex: 1; min-height: 0; border: 2px solid #2a2a2a; }
.model { width: 100%; height: 100%; background: #c0c0c0; }
.dim { font: 12px "DejaVu Sans", sans-serif; }
.bottom { padding-top: 3px; align-items: flex-start; }
.c5, .c8 { display: grid; grid-template-columns: repeat(5, 31px); row-gap: 1px; }
.c8 { grid-template-columns: repeat(8, 31px); }

.right { display: flex; flex-direction: column; flex: none; width: 290px; padding: 80px 2px 0 0; border-left: 5px solid #666; }
.box { position: relative; display: flex; flex-wrap: wrap; align-content: flex-start; flex: none; height: 58px; padding: 1px 0 0 7px; border: 1px solid #2a2a2a; outline: 1px solid #505050; outline-offset: -1px; margin-left: 6px; }
.box::before { content: ""; position: absolute; left: 2px; top: 19px; width: 2px; height: 30px; background: #98e00c; }
.b4 { width: 128px; } .b5 { width: 163px; padding-right: 20px; } .b7 { width: 193px; }
.mini { width: 26px; height: 26px; }
.mini svg { width: 26px; height: 26px; }
.sans { margin: 1px 0 0 5px; font-family: "DejaVu Sans Condensed", Roboto, sans-serif; }
.sans .tab { padding: 0 5px; }
.charts { display: flex; flex-direction: column; gap: 3px; flex: 1; min-height: 0; overflow: hidden; border: 1px solid #2a2a2a; border-bottom: 0; padding: 1px 5px 0 1px; margin-left: 5px; }
.chart { flex: none; width: 100%; background: #fff; }
.grid { stroke: #aaaaf0; stroke-dasharray: 1 1; }
.tick { stroke: #707078; } .axis { stroke: #000; stroke-width: 2; }
.red { stroke: #f00; stroke-width: 2; } .navy { stroke: #000080; stroke-width: 2; }
.lab { font: 11px "Liberation Sans", sans-serif; fill: #000; text-anchor: end; }
#node { fill: #000; }

.brand { position: absolute; top: 0; right: 0; width: 293px; height: 138px; padding: 3px 8px 0 9px; background: #373737; color: #fff; overflow: hidden; }
.brandtop { display: flex; gap: 7px; height: 64px; }
.brandtop svg { flex: none; width: 66px; height: 66px; }
.brandtop strong { font: 700 81px/62px "DejaVu Sans", sans-serif; }
.brand p { height: 32px; font: 800 26px/32px "Open Sans", "Noto Sans", sans-serif; text-transform: uppercase; white-space: nowrap; }
.brand b { font-size: 33px; font-weight: 700; }
.callout { position: absolute; right: 96px; bottom: 33px; width: 368px; height: 132px; padding: 11px; border: 2px solid #10a88c; border-radius: 8px; background: #fdfdfd; box-shadow: 4px 2px 16px rgba(0, 0, 0, .3); color: #303c46; font: 31px/35px "Liberation Sans", Arial, sans-serif; }
.cursor { position: absolute; left: 656px; top: 64px; width: 14px; height: 22px; }
```
